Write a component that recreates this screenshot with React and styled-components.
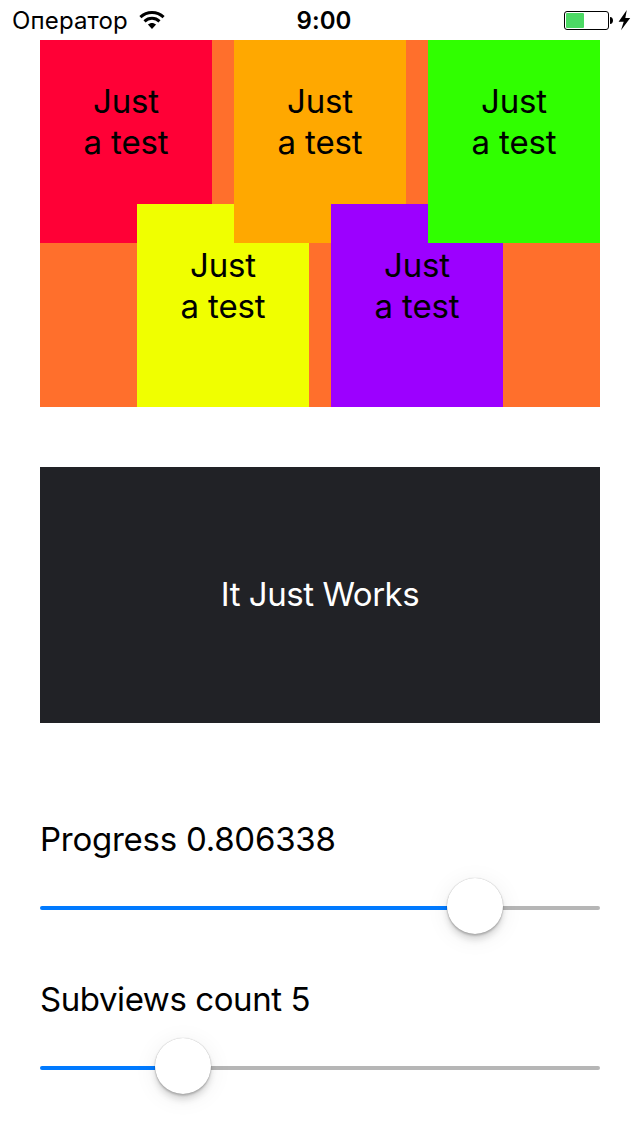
import React from "react";
import styled, { createGlobalStyle } from "styled-components";

const GlobalStyle = createGlobalStyle`
  * { box-sizing: border-box; }
  body {
    margin: 0;
    background: #fff;
    color: #000;
    font-family: Inter, "Liberation Sans", sans-serif;
  }
`;

const Screen = styled.div`
  width: 640px;
  height: 1136px;
  overflow: hidden;
  background: #fff;
`;

const StatusBar = styled.header`
  display: grid;
  grid-template-columns: 1fr auto 1fr;
  align-items: center;
  height: 40px;
  padding: 0 9px 0 12px;
  font-size: 24px;
  line-height: 38px;
`;

const Carrier = styled.div`
  display: flex;
  align-items: center;
  gap: 11px;
  letter-spacing: 0.15px;
`;

const StatusText = styled.span`
  padding-top: 2px;
`;

const Clock = styled.div`
  padding: 2px 0 0 5px;
  font-weight: 600;
  letter-spacing: 0.1px;
`;

const Power = styled.div`
  display: flex;
  justify-content: flex-end;
  padding-top: 2px;
`;

const Content = styled.main`
  padding: 0 40px;
`;

const Board = styled.section`
  display: flex;
  height: 367px;
  background: #ff6f2c;
`;

const Tile = styled.div`
  flex: none;
  align-self: ${(p) => (p.$low ? "flex-end" : "flex-start")};
  z-index: 0;
  width: 172px;
  height: 203px;
  padding-top: 41px;
  background: ${(p) => p.$color};
  font-size: 33px;
  line-height: 41px;
  letter-spacing: -0.1px;
  text-align: center;

  & + & {
    margin-left: -75px;
  }
`;

const Banner = styled.section`
  display: flex;
  align-items: center;
  justify-content: center;
  height: 256px;
  margin-top: 60px;
  padding-bottom: 2px;
  background: #212226;
  color: #fff;
  font-size: 33px;
  line-height: 40px;
  letter-spacing: -0.45px;
`;

const Controls = styled.section`
  margin-top: 96px;
`;

const Control = styled.div`
  height: 160px;
`;

const Label = styled.div`
  height: 40px;
  font-size: 33px;
  line-height: 40px;
  letter-spacing: ${(p) => p.$spacing};
  white-space: nowrap;
`;

const Slider = styled.div`
  display: flex;
  align-items: center;
  height: 56px;
  margin-top: 19px;
`;

const Track = styled.div`
  flex: ${(p) => (p.$filled ? "none" : "1")};
  height: 4px;
  margin-top: 4px;
  border-radius: ${(p) => (p.$filled ? "2px 0 0 2px" : "0 2px 2px 0")};
  background: ${(p) => (p.$filled ? "#007aff" : "#b6b6b6")};
`;

const Thumb = styled.div`
  flex: none;
  z-index: 1;
  width: 56px;
  height: 56px;
  border-radius: 50%;
  background: #fff;
  box-shadow: 0 0 1px rgba(0, 0, 0, 0.35), 0 2px 2px rgba(0, 0, 0, 0.18),
    0 6px 6px rgba(0, 0, 0, 0.12), 0 4px 24px rgba(0, 0, 0, 0.07);
`;

const tiles = [
  { color: "#ff0036" },
  { color: "#f0ff00", low: true },
  { color: "#ffa800" },
  { color: "#9c00ff", low: true },
  { color: "#30ff00" },
];

const sliders = [
  { label: "Progress 0.806338", filled: 407, spacing: "-0.25px" },
  { label: "Subviews count 5", filled: 115, spacing: "-0.43px" },
];

function WifiIcon() {
  return (
    <svg width="26" height="20" viewBox="0 0 26 20">
      <g fill="none" stroke="#000" strokeWidth="3">
        <path d="M1.4 7.1C8 0.9 18 0.9 24.6 7.1" />
        <path d="M5.5 11.3C9.8 7.3 16.2 7.3 20.5 11.3" />
      </g>
      <path d="M13 19L8.9 14.6C11.3 12.4 14.7 12.4 17.1 14.6Z" />
    </svg>
  );
}

function BatteryIcon() {
  return (
    <svg width="67" height="22" viewBox="0 0 67 22">
      <rect x="0.5" y="1.5" width="44" height="18" rx="2.5" fill="#fff" stroke="#000" />
      <rect x="2" y="3" width="18" height="15" rx="1" fill="#4cd964" />
      <path d="M46 7C50 7 50 14 46 14Z" />
      <path d="M62.8 0L54.6 11.8H59.7L57 20.2L66.2 8.1H61.3Z" />
    </svg>
  );
}

export default function App() {
  return (
    <Screen>
      <GlobalStyle />
      <StatusBar>
        <Carrier>
          <StatusText>Оператор</StatusText>
          <WifiIcon />
        </Carrier>
        <Clock>9:00</Clock>
        <Power>
          <BatteryIcon />
        </Power>
      </StatusBar>
      <Content>
        <Board>
          {tiles.map((t) => (
            <Tile key={t.color} $color={t.color} $low={t.low}>
              Just
              <br />a test
            </Tile>
          ))}
        </Board>
        <Banner>It Just Works</Banner>
        <Controls>
          {sliders.map((s) => (
            <Control key={s.label}>
              <Label $spacing={s.spacing}>{s.label}</Label>
              <Slider>
                <Track $filled style={{ width: s.filled }} />
                <Thumb />
                <Track />
              </Slider>
            </Control>
          ))}
        </Controls>
      </Content>
    </Screen>
  );
}
